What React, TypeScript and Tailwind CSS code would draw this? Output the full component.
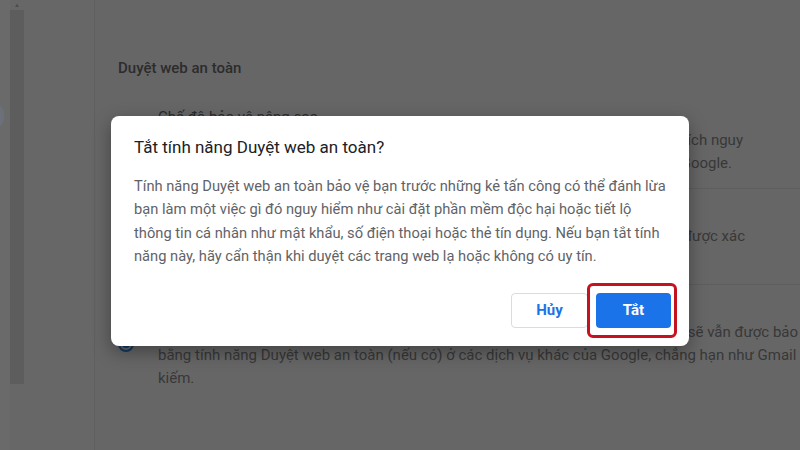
type Line = { text: string; box?: string };

const SettingRow = ({
  title,
  lines,
  selected,
  last,
}: {
  title: string;
  lines: Line[];
  selected?: boolean;
  last?: boolean;
}) => {
  return (
    <div
      className={`flex items-center gap-6 py-[13px] ${
        last ? "" : "border-b border-[#5e5e5e]"
      }`}
    >
      <span
        className={`w-4 h-4 shrink-0 rounded-full border-2 ${
          selected ? "border-[#113a66]" : "border-[#4a4a4a]"
        } flex items-center justify-center`}
      >
        {selected && <span className="w-2 h-2 rounded-full bg-[#113a66]" />}
      </span>
      <div className="text-[15px] leading-[23px] whitespace-nowrap">
        <div className="text-[#2c2c2c]">{title}</div>
        {lines.map((line) =>
          line.box ? (
            <div key={line.text} className={`flex justify-end text-[#383838] ${line.box}`}>
              <span className="shrink-0">{line.text}</span>
            </div>
          ) : (
            <div key={line.text} className="text-[#383838]">
              {line.text}
            </div>
          )
        )}
      </div>
    </div>
  );
};

const App = () => {
  return (
    <div className="relative w-[800px] h-[450px] overflow-hidden bg-[#666666] font-['Roboto',sans-serif]">
      <div className="flex h-full">
        {/* left panel with scrollbar */}
        <aside className="w-[95px] shrink-0 flex bg-[#676767] border-r border-[#5f5f5f]">
          <div className="w-[10px] bg-[#6a6a6a]" />
          <div className="w-[14px] flex flex-col items-center">
            <span className="text-[6px] leading-[10px] text-[#4c4c4c]">▲</span>
            <div className="w-full h-[374px] bg-[#5d5d5d]" />
          </div>
        </aside>

        {/* dimmed settings page */}
        <main className="flex-1 min-w-0 pl-[23px] pt-[57px]">
          <h2 className="text-[15px] leading-[22px] font-medium text-[#2c2c2c] mb-[14px]">
            Duyệt web an toàn
          </h2>
          <SettingRow
            title="Chế độ bảo vệ nâng cao"
            lines={[
              {
                text: "Bảo vệ nhanh hơn và chủ động hơn khỏi các trang web, tệp tải xuống và tiện ích nguy",
                box: "w-[585px]",
              },
              {
                text: "hiểm. Cảnh báo bạn về các vụ vi phạm mật khẩu. Yêu cầu gửi dữ liệu đến Google.",
                box: "w-[574px]",
              },
            ]}
          />
          <SettingRow
            title="Bảo vệ chuẩn"
            lines={[
              {
                text: "Bảo vệ chống lại các trang web, tệp tải xuống và tiện ích đã được xác",
                box: "w-[587px]",
              },
              { text: "định là nguy hiểm." },
            ]}
          />
          <SettingRow
            title="Không bảo vệ (không nên dùng)"
            selected
            last
            lines={[
              {
                text: "Không bảo vệ bạn trước các trang web, tệp tải xuống và tiện ích nguy hiểm. Bạn sẽ vẫn được bảo vệ",
              },
              {
                text: "bằng tính năng Duyệt web an toàn (nếu có) ở các dịch vụ khác của Google, chẳng hạn như Gmail và Tìm",
              },
              { text: "kiếm." },
            ]}
          />
          <h2 className="mt-[42px] text-[15px] leading-[22px] font-medium text-[#2c2c2c]">
            Nâng cao
          </h2>
        </main>
      </div>

      {/* faint focus ring at the left edge */}
      <span className="absolute -left-[12px] top-[105px] w-[16px] h-[22px] rounded-full bg-[#6b7079]" />

      {/* dialog */}
      <div className="absolute left-[111px] top-[116px] w-[578px] h-[230px] bg-white rounded-lg shadow-[0_6px_18px_rgba(0,0,0,0.35)] flex flex-col pl-[23px] pr-[18px] pt-[19px] pb-[18px]">
        <h1 className="text-[17px] leading-[24px] text-[#202124]">
          Tắt tính năng Duyệt web an toàn?
        </h1>
        <p className="mt-[16px] text-[14.7px] leading-[23.3px] text-[#5f6368] whitespace-nowrap">
          Tính năng Duyệt web an toàn bảo vệ bạn trước những kẻ tấn công có thể đánh lừa
          <br />
          bạn làm một việc gì đó nguy hiểm như cài đặt phần mềm độc hại hoặc tiết lộ
          <br />
          thông tin cá nhân như mật khẩu, số điện thoại hoặc thẻ tín dụng. Nếu bạn tắt tính
          <br />
          năng này, hãy cẩn thận khi duyệt các trang web lạ hoặc không có uy tín.
        </p>
        <div className="mt-auto flex justify-end gap-[8px]">
          <button className="w-[77px] h-[35px] rounded-[4px] border border-[#dadce0] bg-white text-[15px] font-bold text-[#1a73e8]">
            Hủy
          </button>
          <div className="relative">
            <span className="absolute -left-[9px] -right-[6px] -top-[10px] -bottom-[10px] rounded-[6px] border-[3px] border-[#c4121f]" />
            <button className="w-[75px] h-[35px] rounded-[4px] bg-[#1a73e8] text-[15px] font-bold text-white">
              Tắt
            </button>
          </div>
        </div>
      </div>
    </div>
  );
};

export default App;
